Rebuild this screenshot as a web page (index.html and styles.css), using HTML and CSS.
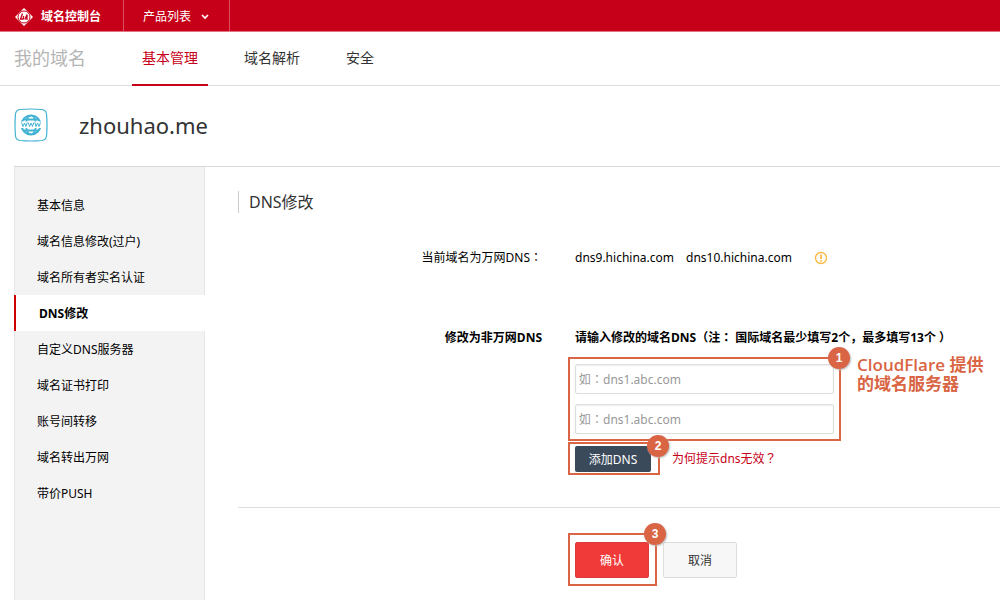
FILE: index.html
```html
<!DOCTYPE html>
<html lang="zh-CN">
<head>
<meta charset="utf-8">
<meta name="viewport" content="width=device-width, initial-scale=1">
<title>DNS修改 - 域名控制台</title>
<link rel="stylesheet" href="styles.css">
</head>
<body>
<header class="topbar">
  <a class="brand" href="#">
    <svg class="brand-logo" viewBox="0 0 18 18" aria-hidden="true">
      <path d="M9 0 18 9 9 18 0 9z" fill="#fff"/>
      <circle cx="9" cy="9" r="6" fill="#fff" stroke="#c70019" stroke-width="1"/>
      <path d="M7.500 5.500 5.500 11h2.500M8.500 8v3.500M10 11.500l2-5v5.500M10.500 9.800h2" fill="none" stroke="#c70019" stroke-width="1.300"/>
    </svg>
    域名控制台
  </a>
  <button class="products" type="button">产品列表
    <svg class="chevron" viewBox="0 0 8 6" aria-hidden="true"><path d="M1 1 4 4 7 1" fill="none" stroke="#fff" stroke-width="1.700"/></svg>
  </button>
</header>
<nav class="mainnav" aria-label="主导航">
  <span class="mainnav-title">我的域名</span>
  <a class="tab tab-active" href="#">基本管理</a>
  <a class="tab" href="#">域名解析</a>
  <a class="tab" href="#">安全</a>
</nav>
<div class="page">
  <div class="domain">
    <svg class="domain-icon" viewBox="0 0 34 34" aria-hidden="true">
      <path d="M6 1.500Q17 .5 28 1.500 32 2 32.500 6 33.500 17 32.500 28 32 32 28 32.500 17 33.500 6 32.500 2 32 1.500 28 .5 17 1.500 6 2 2 6 1.500z" fill="#fff" stroke="#41b3d3" stroke-width="1.200"/>
      <circle cx="17" cy="17" r="9.500" fill="none" stroke="#41b3d3" stroke-width="2"/>
      <ellipse cx="17" cy="17" rx="5" ry="9.500" fill="none" stroke="#41b3d3" stroke-width="1.600"/>
      <path d="M10 11.500h14M10 22.500h14" fill="none" stroke="#41b3d3" stroke-width="2"/>
      <path d="M6 13.500h22v6.500H6z" fill="#fff"/>
      <path d="M7.500 14.500 9 18.500 10.500 15 12 18.500 13.200 14.500M14.200 14.500 15.500 18.500 17 15 18.500 18.500 19.800 14.500M20.800 14.500 22 18.500 23.500 15 25 18.500 26.500 14.500" fill="none" stroke="#41b3d3"/>
    </svg>
    <h1 class="domain-name">zhouhao.me</h1>
  </div>
  <div class="columns">
    <nav class="sidebar" aria-label="域名菜单">
      <a class="side-link" href="#">基本信息</a>
      <a class="side-link" href="#">域名信息修改(过户)</a>
      <a class="side-link" href="#">域名所有者实名认证</a>
      <a class="side-link side-active" href="#" aria-current="page">DNS修改</a>
      <a class="side-link" href="#">自定义DNS服务器</a>
      <a class="side-link" href="#">域名证书打印</a>
      <a class="side-link" href="#">账号间转移</a>
      <a class="side-link" href="#">域名转出万网</a>
      <a class="side-link" href="#">带价PUSH</a>
    </nav>
    <main class="content">
      <h2 class="section-title">DNS修改</h2>
      <form class="dns-form">
        <div class="row">
          <span class="row-label">当前域名为万网DNS<span class="punct" lang="zh-TW">：</span></span>
          <div class="current">
            <span>dns9.hichina.com</span>
            <span>dns10.hichina.com</span>
            <svg class="warn" viewBox="0 0 14 14" aria-hidden="true"><circle cx="7" cy="7" r="5.500" fill="none" stroke="#fdb940" stroke-width="1.400"/><path d="M7 3.500v4.500M7 9v1.600" stroke="#fdb940" stroke-width="1.800"/></svg>
          </div>
        </div>
        <div class="row row-edit">
          <span class="row-label strong">修改为非万网DNS</span>
          <div class="edit">
            <p class="hint strong">请输入修改的域名DNS（注<span class="punct" lang="zh-TW">：</span> 国际域名最少填写2个，最多填写13个 ）</p>
            <div class="dns-group">
              <div class="inputs">
                <input class="field" type="text" lang="zh-TW" aria-label="DNS 1" placeholder="如：dns1.abc.com">
                <input class="field" type="text" lang="zh-TW" aria-label="DNS 2" placeholder="如：dns1.abc.com">
                <span class="mark mark-inputs"><span class="badge">1</span></span>
              </div>
              <p class="note">CloudFlare 提供<br>的域名服务器</p>
            </div>
            <div class="add-row">
              <span class="marked">
                <button class="btn-add" type="button">添加DNS</button>
                <span class="mark mark-add"><span class="badge">2</span></span>
              </span>
              <a class="help" href="#">为何提示dns无效<span class="punct" lang="zh-TW">？</span></a>
            </div>
          </div>
        </div>
        <div class="actions">
          <span class="marked">
            <button class="btn btn-primary" type="submit">确认</button>
            <span class="mark mark-ok"><span class="badge">3</span></span>
          </span>
          <button class="btn" type="button">取消</button>
        </div>
      </form>
    </main>
  </div>
</div>
</body>
</html>
```
FILE: styles.css
```css
* { box-sizing: border-box; }
body {
  margin: 0;
  background: #fff;
  color: #000;
  font: 12px/20px "Noto Sans", "Noto Sans CJK SC", sans-serif;
}
a { color: inherit; text-decoration: none; }
button, input { font: inherit; }
h1, h2, p { margin: 0; }
button { cursor: pointer; }

.topbar {
  display: flex;
  height: 32px;
  background: #c70019;
  color: #fff;
  border-bottom: 1px solid #e27483;
}
.brand {
  display: flex;
  align-items: center;
  gap: 8px;
  padding: 2px 22px 0 15px;
  font-weight: 700;
  border-right: 1px solid #dc4d60;
}
.brand-logo { width: 18px; height: 18px; }
.products {
  display: flex;
  align-items: center;
  gap: 10px;
  padding: 2px 20px 0 19px;
  border: 0;
  border-right: 1px solid #dc4d60;
  background: none;
  color: #fff;
}
.chevron { width: 8px; height: 6px; }

.mainnav {
  display: flex;
  height: 54px;
  padding-left: 14px;
  border-bottom: 1px solid #ddd;
  font-size: 14px;
  line-height: 52px;
  color: #333;
}
.mainnav-title { width: 118px; font-size: 18px; color: #b5b5b5; }
.tab { height: 54px; margin-right: 26px; padding: 0 10px; }
.tab-active { color: #c70019; border-bottom: 2px solid #c70019; }

.page { padding-left: 14px; }
.domain {
  display: flex;
  align-items: center;
  gap: 31px;
  height: 80px;
  padding-bottom: 2px;
}
.domain-icon { width: 34px; height: 34px; }
.domain-name { font-size: 22px; line-height: 32px; font-weight: 400; color: #333; }

.columns { display: flex; border-top: 1px solid #d9d9d9; }
.sidebar {
  display: flex;
  flex-direction: column;
  flex: none;
  width: 191px;
  min-height: calc(100vh - 167px);
  padding-top: 20px;
  background: linear-gradient(#e6e6e6, #e6e6e6) left / 1px 100% no-repeat,
    linear-gradient(#e6e6e6, #e6e6e6) right / 1px 100% no-repeat, #f3f3f3;
}
.side-link { height: 36px; padding-left: 23px; line-height: 38px; }
.side-active {
  border-left: 2px solid #c00;
  background: #fff;
  font-weight: 700;
}

.content { flex: 1; min-width: 0; padding: 24px 0 14px 33px; }
.section-title {
  padding-left: 10px;
  border-left: 1px solid #ccc;
  font-size: 16px;
  line-height: 22px;
  font-weight: 400;
  color: #333;
}
.dns-form { padding-top: 35px; }
.row { display: flex; gap: 33px; }
.row-edit { padding: 60px 0 35px; border-bottom: 1px solid #ddd; }
.row-label { flex: none; width: 304px; text-align: right; }
.strong { font-weight: 700; }
.punct { font-family: "Noto Sans CJK TC", sans-serif; line-height: 1; }
.current { display: flex; align-items: center; gap: 12px; }
.warn { width: 14px; height: 14px; margin-left: 10px; }
.hint { white-space: nowrap; }

.dns-group { display: flex; gap: 23px; padding-top: 16px; }
.inputs {
  position: relative;
  display: flex;
  flex-direction: column;
  gap: 10px;
  width: 259px;
}
.field {
  width: 100%;
  height: 30px;
  padding: 0 3px;
  border: 1px solid #ddd;
  border-radius: 2px;
  box-shadow: inset 0 1px 2px #eee;
  font-family: "Noto Sans", "Noto Sans CJK TC", sans-serif;
}
.field::placeholder { color: #999; opacity: 1; }
.add-row { display: flex; align-items: center; gap: 21px; padding-top: 12px; }
.marked { position: relative; display: flex; }
.btn-add {
  width: 76px;
  height: 26px;
  padding: 1px 0 0;
  border: 0;
  border-radius: 2px;
  background: #3b4a5b;
  color: #fff;
}
.help { color: #c70019; }

.mark { position: absolute; border: 2px solid #d96544; pointer-events: none; }
.mark-inputs { inset: -7px -7px -7px; }
.mark-add { inset: -4px -9px -3px -7px; }
.mark-ok { inset: -9px -8px -8px -7px; }
.badge {
  position: absolute;
  top: -12px;
  right: -11px;
  width: 22px;
  height: 22px;
  border-radius: 50%;
  background: #d96544;
  box-shadow: 1px 1px 2px #bbb;
  color: #fff;
  font: 700 12px/22px "Liberation Sans", sans-serif;
  text-align: center;
}
.mark-add .badge { top: -9px; }
.note {
  margin-top: -9px;
  color: #d96544;
  font: 600 17px/19px "Open Sans", "Noto Sans CJK SC", sans-serif;
  white-space: nowrap;
}

.actions { display: flex; gap: 14px; padding: 34px 0 0 337px; }
.btn {
  width: 74px;
  height: 36px;
  padding: 2px 0 0;
  border: 1px solid #ddd;
  border-radius: 2px;
  background: #f7f7f7;
  color: #333;
}
.btn-primary { border-color: #d93a3a; background: #f03a3a; color: #fff; }
```
